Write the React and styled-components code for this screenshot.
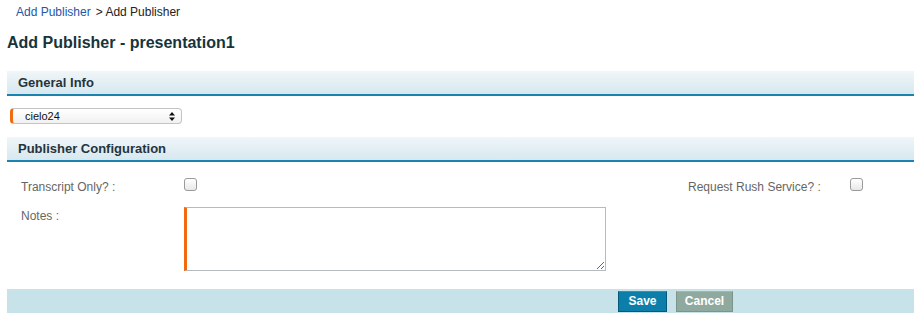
import React from "react";
import styled, { createGlobalStyle } from "styled-components";

const Global = createGlobalStyle`
  body {
    margin: 0;
    background: #fff;
    font-family: "Liberation Sans", Arial, sans-serif;
  }
`;

const Page = styled.div`
  padding: 0 0 0 7px;
  width: 907px;
`;

const Breadcrumb = styled.div`
  font-size: 12px;
  line-height: 14px;
  padding: 5px 0 0 9px;
  color: #222;
  a {
    color: #2456a8;
    text-decoration: none;
    margin-right: 5px;
  }
`;

const Title = styled.h1`
  margin: 15px 0 0;
  font-size: 16px;
  line-height: 18px;
  font-weight: bold;
  color: #17343a;
`;

const SectionHead = styled.div`
  margin-top: ${(p) => p.$top}px;
  height: 23px;
  display: flex;
  align-items: center;
  padding-left: 11px;
  font-size: 13px;
  font-weight: bold;
  color: #26343a;
  background: linear-gradient(#f0f6f9, #d6e8ef);
  border-bottom: 2px solid #1984b0;
`;

const FakeSelect = styled.div`
  margin: 12px 0 0 3px;
  width: 150px;
  height: 14px;
  display: flex;
  align-items: center;
  justify-content: space-between;
  padding: 0 6px 0 12px;
  font-size: 11px;
  color: #111;
  background: linear-gradient(#ffffff, #f1f1f1);
  border: 1px solid #c4c4c4;
  border-left: 3px solid #f26a10;
  border-radius: 4px;
`;

const ConfigGrid = styled.div`
  display: grid;
  grid-template-columns: 163px 504px 162px auto;
  row-gap: 13px;
  padding: 18px 0 0 14px;
`;

const Label = styled.div`
  font-size: 12px;
  line-height: 14px;
  color: #666;
  padding-top: ${(p) => p.$top || 0}px;
`;

const Check = styled.span`
  display: block;
  width: 11px;
  height: 11px;
  border: 1px solid #9a9a9a;
  border-radius: 3px;
  background: linear-gradient(#ffffff, #e8e8e8);
  margin-top: -2px;
`;

const Notes = styled.textarea`
  grid-column: 2 / span 3;
  width: 418px;
  height: 62px;
  margin: 0;
  padding: 0;
  box-sizing: content-box;
  border: 1px solid #b5bcc0;
  border-left: 3px solid #f26a10;
  resize: both;
  font-family: inherit;
`;

const Footer = styled.div`
  margin-top: 18px;
  height: 24px;
  background: #c8e2ea;
  display: flex;
  align-items: center;
  gap: 9px;
  padding-left: 611px;
`;

const Button = styled.button`
  height: 21px;
  width: ${(p) => p.$w}px;
  padding: 0;
  font-family: inherit;
  font-size: 12px;
  font-weight: bold;
  color: #fff;
  background: ${(p) => (p.$primary ? "#0b7fa9" : "#8fa99f")};
  border: 1px solid ${(p) => (p.$primary ? "#06587a" : "#7b958b")};
  border-top-color: ${(p) => (p.$primary ? "#2a93ba" : "#a2b8ae")};
  cursor: pointer;
`;

const Arrows = () => (
  <svg width="6" height="9" viewBox="0 0 6 9">
    <path d="M0 3.5L3 0L6 3.5Z M0 5.5L3 9L6 5.5Z" fill="#111" />
  </svg>
);

export default function App() {
  return (
    <>
      <Global />
      <Page>
        <Breadcrumb>
          <a href="#">Add Publisher</a>&gt; Add Publisher
        </Breadcrumb>
        <Title>Add Publisher - presentation1</Title>
        <SectionHead $top={19}>General Info</SectionHead>
        <FakeSelect>
          <span>cielo24</span>
          <Arrows />
        </FakeSelect>
        <SectionHead $top={13}>Publisher Configuration</SectionHead>
        <ConfigGrid>
          <Label>Transcript Only? :</Label>
          <div>
            <Check />
          </div>
          <Label>Request Rush Service? :</Label>
          <div>
            <Check />
          </div>
          <Label $top={2}>Notes :</Label>
          <Notes />
        </ConfigGrid>
        <Footer>
          <Button $primary $w={49}>Save</Button>
          <Button $w={57}>Cancel</Button>
        </Footer>
      </Page>
    </>
  );
}
